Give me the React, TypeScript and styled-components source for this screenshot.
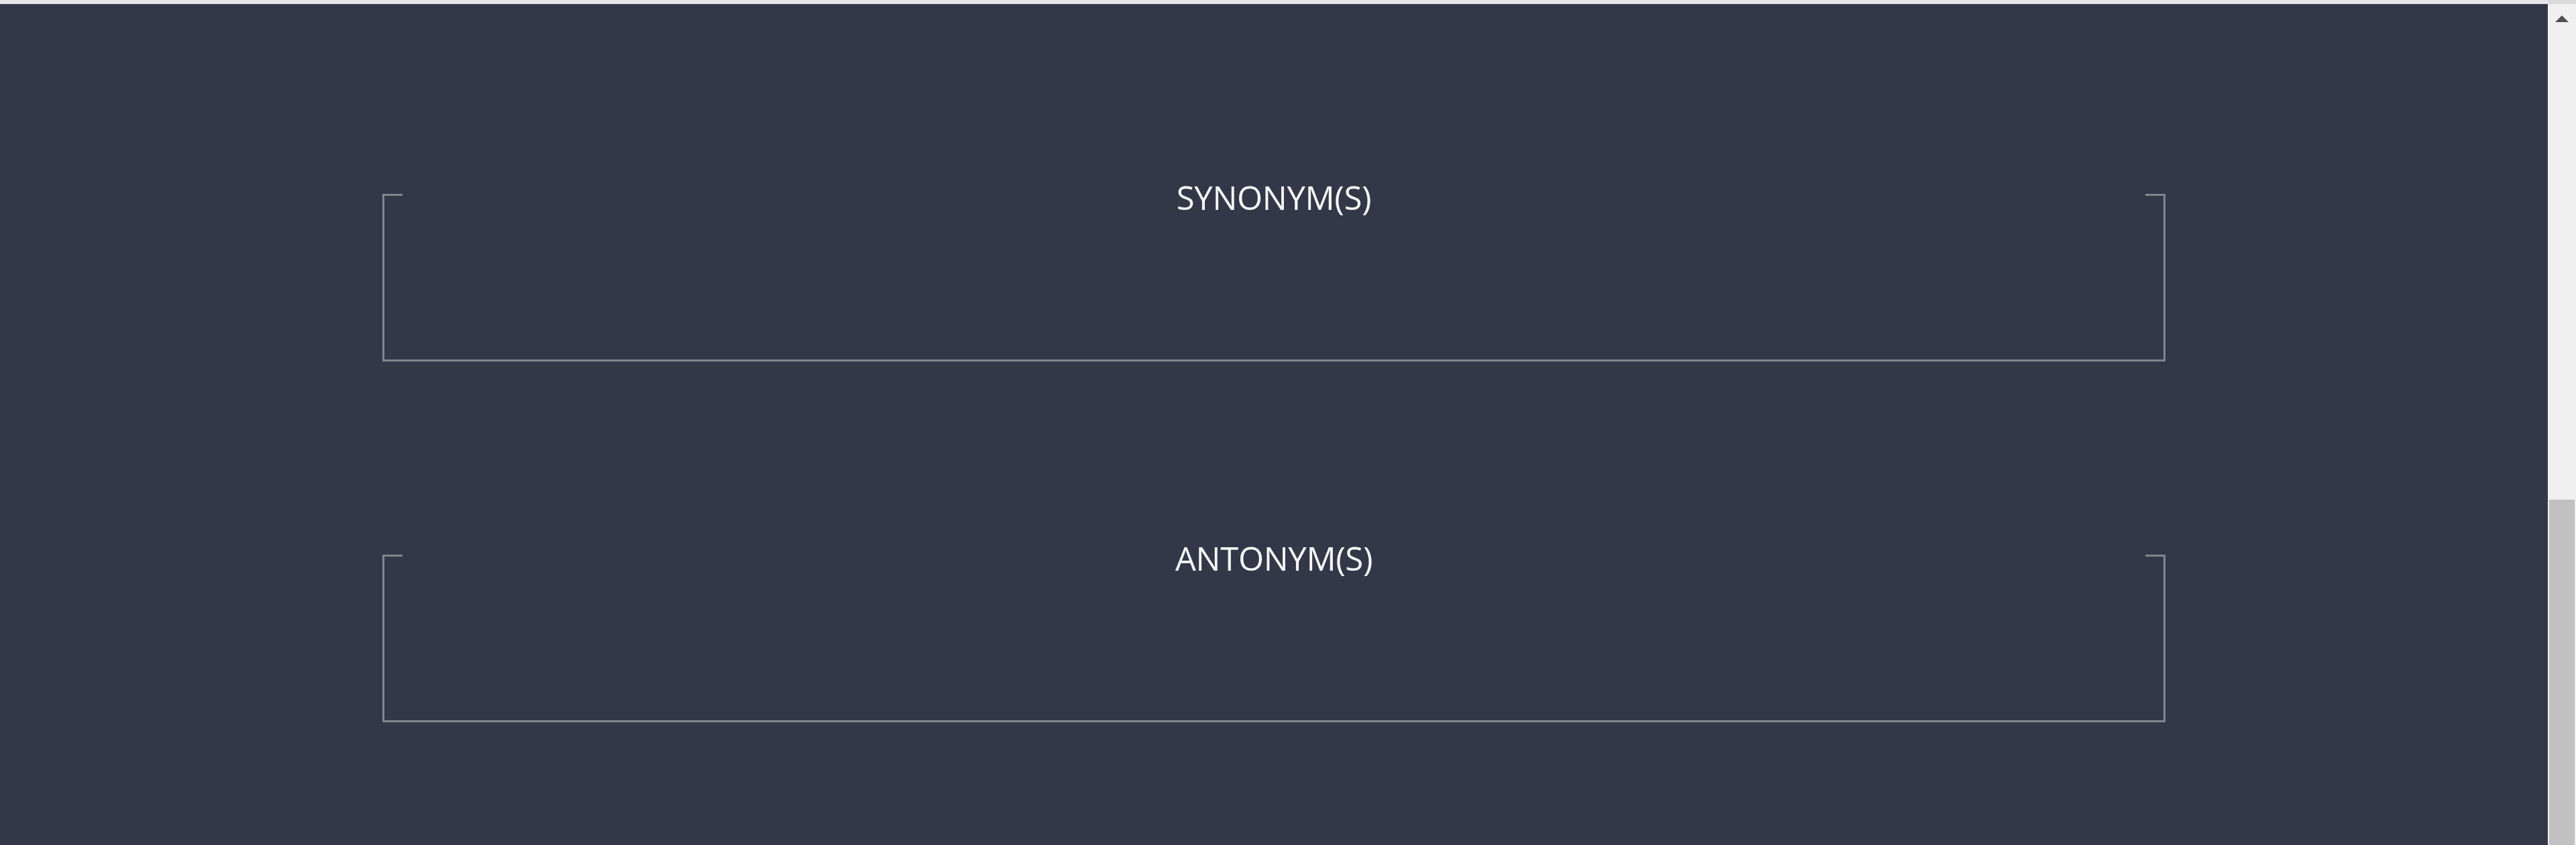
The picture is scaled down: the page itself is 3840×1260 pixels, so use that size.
import React from "react";
import styled, { createGlobalStyle } from "styled-components";

const Global = createGlobalStyle`
  html, body {
    margin: 0;
    padding: 0;
    overflow: hidden;
    background: #333849;
  }
  * { box-sizing: border-box; }
`;

const Page = styled.div`
  display: flex;
  flex-direction: column;
  height: 100vh;
  width: 100vw;
  font-family: "Open Sans", "Noto Sans", sans-serif;
`;

const TopStrip = styled.div`
  display: flex;
  height: 6px;
  flex-shrink: 0;
`;

const TopStripMain = styled.div`
  flex: 1;
  background: #e6e6e9;
`;

const TopStripScroll = styled.div`
  width: 42px;
  background: #dadada;
`;

const Body = styled.div`
  display: flex;
  flex: 1;
  min-height: 0;
`;

const Main = styled.main`
  flex: 1;
  background: #333849;
  display: flex;
  flex-direction: column;
  align-items: center;
  padding-top: 283px;
  gap: 288px;
`;

const Section = styled.section`
  width: 70%;
  height: 250px;
  display: flex;
  flex-direction: column;
  border: 3px solid #7e878d;
  border-top: none;
`;

const Header = styled.div`
  display: flex;
  align-items: flex-start;
  margin-left: -3px;
  margin-right: -3px;
`;

const Tick = styled.span`
  width: 30px;
  height: 3px;
  background: #7e878d;
  flex-shrink: 0;
`;

const Title = styled.h2`
  flex: 1;
  margin: -19px 0 0;
  text-align: center;
  font-family: "Open Sans", "Noto Sans", sans-serif;
  font-weight: 400;
  font-size: 49px;
  line-height: 49px;
  color: #f7f7f7;
  letter-spacing: -0.3px;
`;

const Scrollbar = styled.div`
  width: 42px;
  flex-shrink: 0;
  background: #f0f0f0;
  display: flex;
  flex-direction: column;
  align-items: stretch;
`;

const ArrowButton = styled.div`
  height: 42px;
  display: flex;
  justify-content: center;
  padding-top: 17px;
`;

const Track = styled.div`
  flex: 1;
  display: flex;
  flex-direction: column;
  padding: 697px 2px 0;
`;

const Thumb = styled.div`
  flex: 1;
  background: #c1c1c1;
`;

const sections = ["SYNONYM(S)", "ANTONYM(S)"];

export default function App() {
  return (
    <>
      <Global />
      <Page>
        <TopStrip>
          <TopStripMain />
          <TopStripScroll />
        </TopStrip>
        <Body>
          <Main>
            {sections.map((s) => (
              <Section key={s}>
                <Header>
                  <Tick />
                  <Title>{s}</Title>
                  <Tick />
                </Header>
              </Section>
            ))}
          </Main>
          <Scrollbar>
            <ArrowButton>
              <svg width="20" height="10" viewBox="0 0 20 10">
                <polygon points="10,0 20,10 0,10" fill="#505050" />
              </svg>
            </ArrowButton>
            <Track>
              <Thumb />
            </Track>
          </Scrollbar>
        </Body>
      </Page>
    </>
  );
}
